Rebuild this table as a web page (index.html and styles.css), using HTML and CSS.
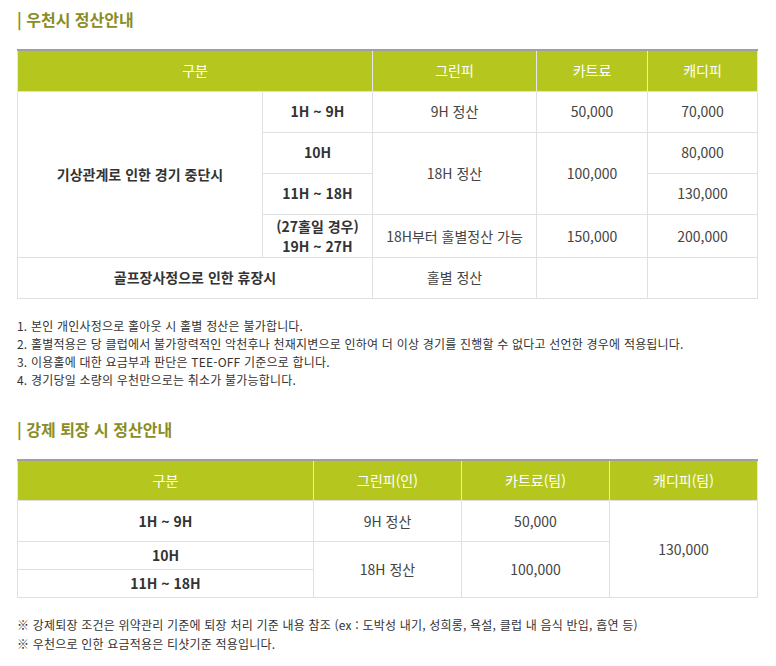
FILE: index.html
```html
<!DOCTYPE html>
<html lang="ko">
<head>
    <meta charset="UTF-8">
    <meta name="viewport" content="width=device-width, initial-scale=1.0">
    <title>우천시 정산안내</title>

    <link rel="stylesheet" href="styles.css">
</head>
<body>

    <div class="container">
        <h2 class="title">| 우천시 정산안내</h2>

        <table class="fee-table">
            <colgroup>
                <col style="width: 245px">
                <col style="width: 110px">
                <col style="width: 164px">
                <col style="width: 111px">
                <col>
            </colgroup>
            <thead>
                <tr>
                    <th colspan="2">구분</th>
                    <th>그린피</th>
                    <th>카트료</th>
                    <th>캐디피</th>
                </tr>
            </thead>
            <tbody>
                <tr class="tall">
                    <td rowspan="4" class="label">기상관계로 인한 경기 중단시</td>
                    <td class="label">1H ~ 9H</td>
                    <td>9H 정산</td>
                    <td>50,000</td>
                    <td>70,000</td>
                </tr>
                <tr class="tall">
                    <td class="label">10H</td>
                    <td rowspan="2">18H 정산</td>
                    <td rowspan="2">100,000</td>
                    <td>80,000</td>
                </tr>
                <tr class="tall">
                    <td class="label">11H ~ 18H</td>
                    <td>130,000</td>
                </tr>
                <tr class="double">
                    <td class="label">(27홀일 경우)<br>19H ~ 27H</td>
                    <td>18H부터 홀별정산 가능</td>
                    <td>150,000</td>
                    <td>200,000</td>
                </tr>
                <tr class="tall">
                    <td colspan="2" class="label">골프장사정으로 인한 휴장시</td>
                    <td>홀별 정산</td>
                    <td></td>
                    <td></td>
                </tr>
            </tbody>
        </table>

        <ul class="notes">
            <li>1. 본인 개인사정으로 홀아웃 시 홀별 정산은 불가합니다.</li>
            <li>2. 홀별적용은 당 클럽에서 불가항력적인 악천후나 천재지변으로 인하여 더 이상 경기를 진행할 수 없다고 선언한 경우에 적용됩니다.</li>
            <li>3. 이용홀에 대한 요금부과 판단은 TEE-OFF 기준으로 합니다.</li>
            <li>4. 경기당일 소량의 우천만으로는 취소가 불가능합니다.</li>
        </ul>

        <h2 class="title second">| 강제 퇴장 시 정산안내</h2>

        <table class="fee-table">
            <colgroup>
                <col style="width: 296px">
                <col style="width: 148px">
                <col style="width: 148px">
                <col>
            </colgroup>
            <thead>
                <tr>
                    <th>구분</th>
                    <th>그린피(인)</th>
                    <th>카트료(팀)</th>
                    <th>캐디피(팀)</th>
                </tr>
            </thead>
            <tbody>
                <tr class="tall">
                    <td class="label">1H ~ 9H</td>
                    <td>9H 정산</td>
                    <td>50,000</td>
                    <td rowspan="3">130,000</td>
                </tr>
                <tr class="short">
                    <td class="label">10H</td>
                    <td rowspan="2">18H 정산</td>
                    <td rowspan="2">100,000</td>
                </tr>
                <tr class="short">
                    <td class="label">11H ~ 18H</td>
                </tr>
            </tbody>
        </table>

        <ul class="notes last">
            <li>※ 강제퇴장 조건은 위약관리 기준에 퇴장 처리 기준 내용 참조 (ex : 도박성 내기, 성희롱, 욕설, 클럽 내 음식 반입, 흡연 등)</li>
            <li>※ 우천으로 인한 요금적용은 티샷기준 적용입니다.</li>
        </ul>
    </div>

</body>
</html>
```

FILE: styles.css
```css
* {
    margin: 0;
    padding: 0;
    box-sizing: border-box;
}

body {
    font-family: "Noto Sans CJK KR", "Noto Sans", sans-serif;
    background-color: #fff;
    color: #333;
}

.container {
    padding: 9px 18px 20px 17px;
}

.title {
    font-size: 16px;
    line-height: 20px;
    font-weight: bold;
    color: #8a8d25;
    margin-bottom: 20px;
}

.title.second {
    margin-top: 30px;
}

.fee-table {
    width: 100%;
    table-layout: fixed;
    border-collapse: collapse;
    border-top: 2px solid #a0a0a0;
    font-size: 14px;
    line-height: 17px;
    text-align: center;
}

.fee-table th {
    height: 41px;
    background-color: #b5c71e;
    color: #fff;
    font-weight: normal;
    border-left: 1px solid #e6e6e6;
    border-right: 1px solid #e6e6e6;
}

.fee-table td {
    padding: 4px 5px;
    border: 1px solid #e0e0e0;
    color: #444;
}

.fee-table tr.tall td {
    height: 41px;
}

.fee-table tr.double td {
    padding: 1px 5px;
    line-height: 20px;
}

.fee-table tr.short td {
    height: 28px;
}

.fee-table td.label {
    font-weight: bold;
    color: #333;
}

.notes {
    list-style: none;
    margin-top: 18px;
    font-size: 12px;
    line-height: 18px;
    letter-spacing: 0.2px;
    color: #333;
}

.notes.last {
    margin-top: 17px;
    line-height: 19px;
}
```
